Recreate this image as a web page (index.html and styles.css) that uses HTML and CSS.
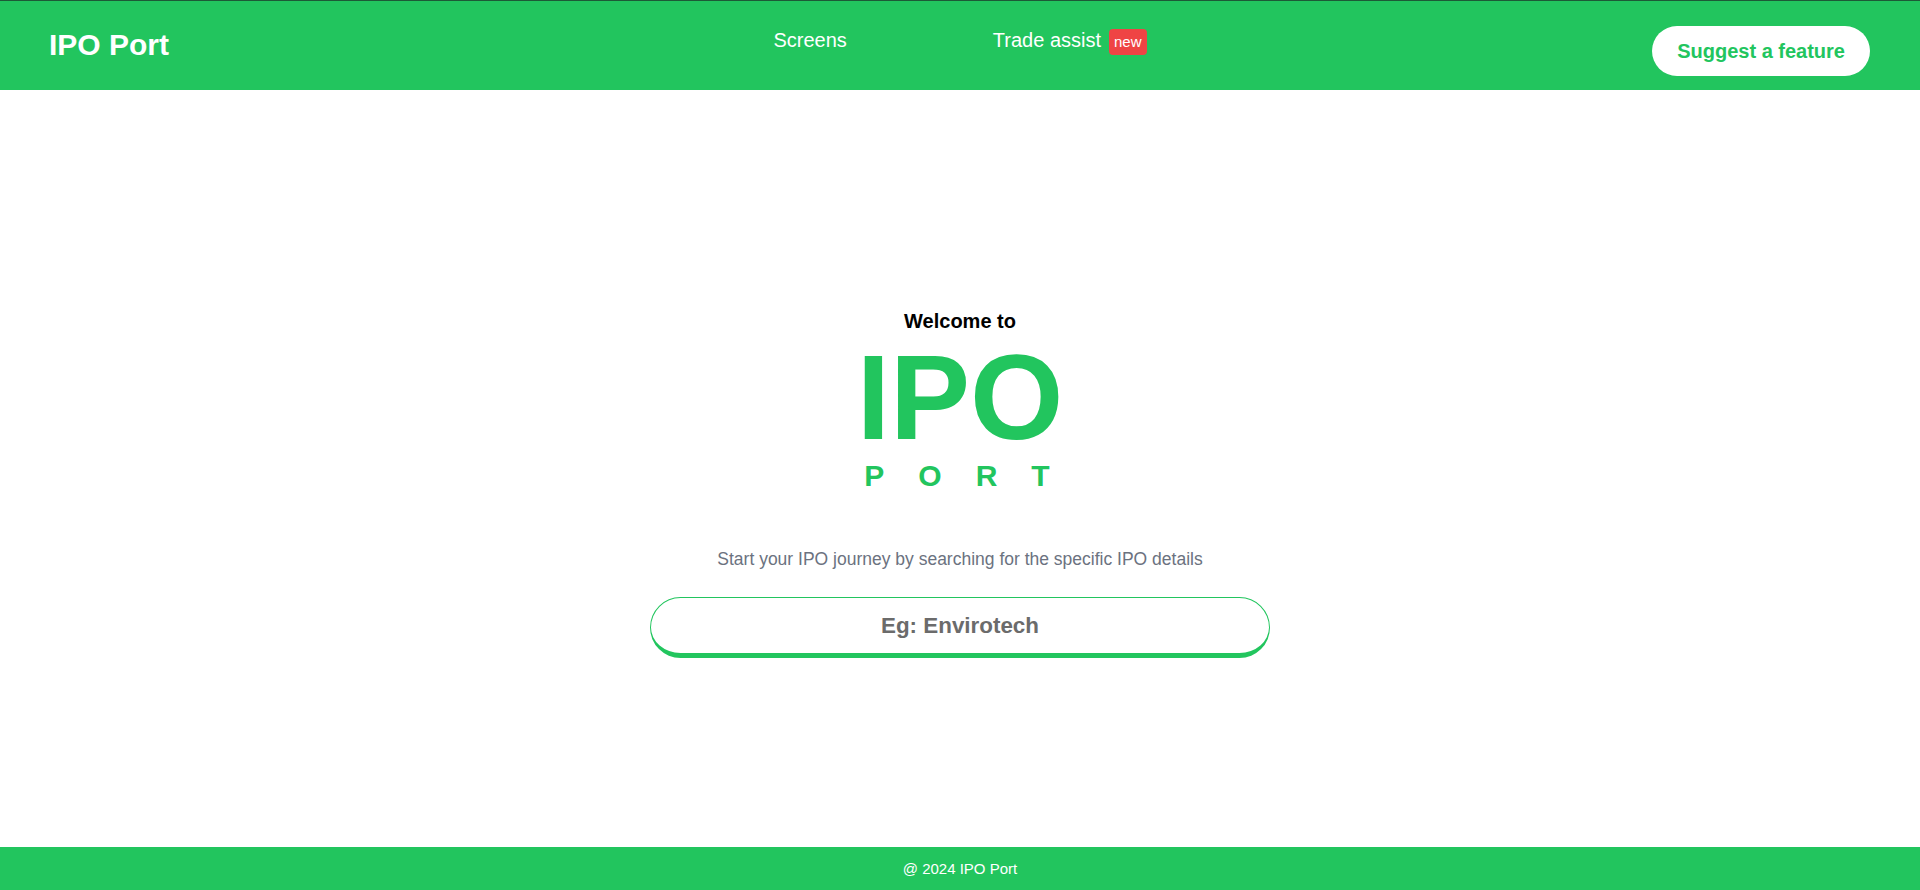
FILE: index.html
```html
<!DOCTYPE html>
<html lang="en">
<head>
<meta charset="utf-8">
<title>IPO Port</title>
<link rel="stylesheet" href="styles.css">
</head>
<body>
<header class="topbar">
  <div class="brand">IPO Port</div>
  <nav class="nav">
    <a class="nav-link" href="#">Screens</a>
    <a class="nav-link" href="#">Trade assist <span class="badge">new</span></a>
  </nav>
  <div class="actions">
    <button class="suggest-btn" type="button">Suggest a feature</button>
  </div>
</header>
<main class="hero">
  <div class="welcome">Welcome to</div>
  <div class="logo-big">IPO</div>
  <div class="logo-sub">PORT</div>
  <p class="tagline">Start your IPO journey by searching for the specific IPO details</p>
  <input class="search" type="text" placeholder="Eg: Envirotech">
</main>
<footer class="footer">@ 2024 IPO Port</footer>
</body>
</html>
```
FILE: styles.css
```css
* { box-sizing: border-box; }
html, body { margin: 0; padding: 0; }
body {
  font-family: "Liberation Sans", Arial, sans-serif;
  height: 100vh;
  display: flex;
  flex-direction: column;
  background: #ffffff;
  color: #000;
}
.topbar {
  height: 90px;
  flex: none;
  background: #22c55e;
  border-top: 1px solid #1d5a37;
  display: grid;
  grid-template-columns: 1fr auto 1fr;
  align-items: center;
  padding: 0 50px 0 49px;
}
.brand {
  color: #fff;
  font-weight: 700;
  font-size: 30px;
  line-height: 36px;
  margin-top: -1px;
}
.nav {
  display: flex;
  align-items: baseline;
  gap: 146px;
  margin-bottom: 10px;
  margin-left: 1px;
}
.nav-link {
  color: #fff;
  text-decoration: none;
  font-size: 20px;
  line-height: 28px;
  display: inline-flex;
  align-items: baseline;
}
.badge {
  background: #ef4444;
  color: #fff;
  font-size: 15px;
  line-height: 20px;
  padding: 3px 5px;
  border-radius: 4px;
  margin-left: 8px;
}
.actions {
  display: flex;
  justify-content: flex-end;
}
.suggest-btn {
  font-family: inherit;
  background: #fff;
  color: #22c55e;
  font-weight: 700;
  font-size: 20px;
  line-height: 28px;
  padding: 11px 25px;
  border: none;
  border-radius: 9999px;
  margin-top: 11px;
  cursor: pointer;
}
.hero {
  flex: 1;
  display: flex;
  flex-direction: column;
  align-items: center;
  justify-content: center;
  padding-top: 28px;
}
.welcome {
  font-weight: 700;
  font-size: 20px;
  line-height: 28px;
  color: #000;
}
.logo-big {
  font-weight: 700;
  font-size: 120px;
  line-height: 120px;
  color: #22c55e;
  margin-top: 2px;
}
.logo-sub {
  font-weight: 700;
  font-size: 30px;
  line-height: 36px;
  letter-spacing: 34px;
  color: #22c55e;
  padding-left: 28px;
  margin-top: 1px;
}
.tagline {
  margin: 53px 0 0;
  font-size: 17.5px;
  line-height: 24px;
  color: #6b7280;
}
.search {
  margin-top: 26px;
  width: 620px;
  height: 61px;
  border: 1px solid #22c55e;
  border-bottom-width: 5px;
  border-radius: 9999px;
  background: #fff;
  font-family: inherit;
  font-weight: 700;
  font-size: 22.4px;
  text-align: center;
  color: #333;
  outline: none;
}
.search::placeholder {
  color: #6b6b6b;
}
.footer {
  height: 43px;
  flex: none;
  background: #22c55e;
  color: #fff;
  font-size: 15px;
  display: flex;
  align-items: center;
  justify-content: center;
}
```
